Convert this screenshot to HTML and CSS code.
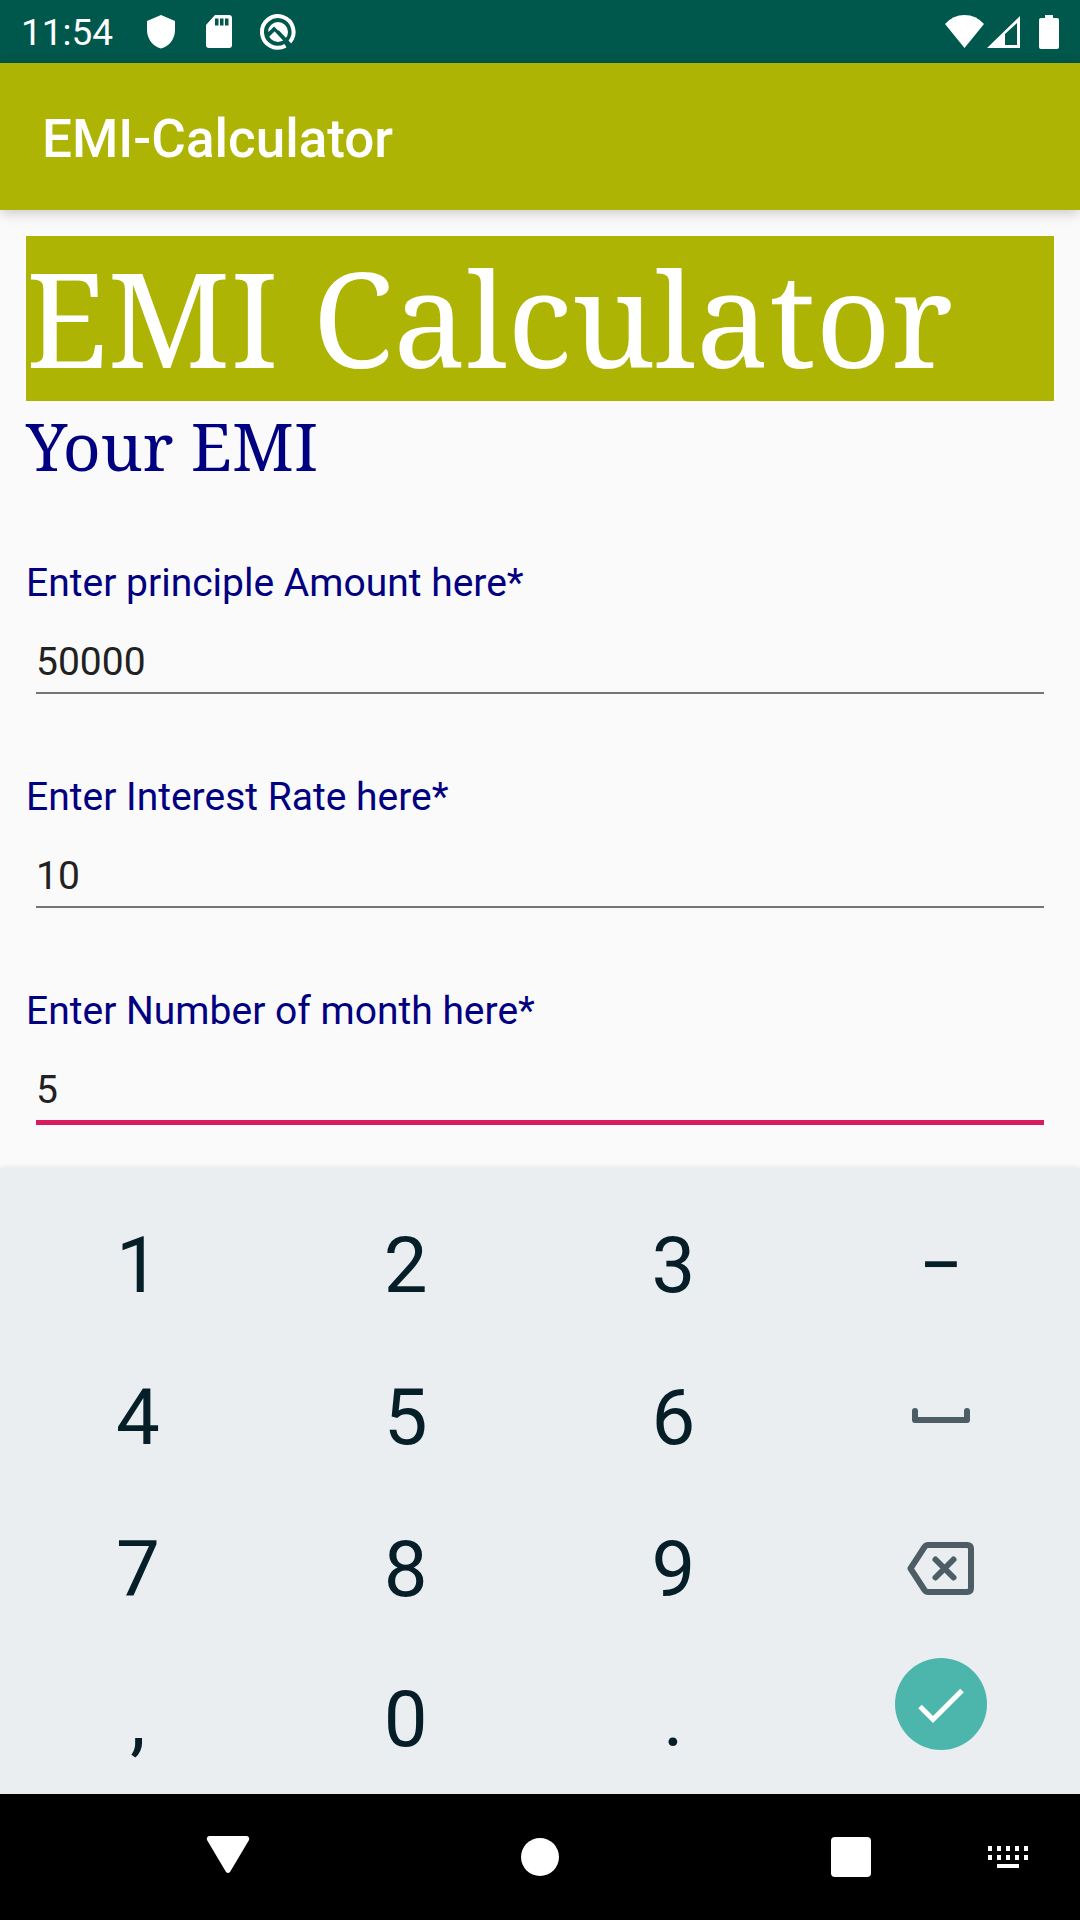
FILE: index.html
```html
<!DOCTYPE html>
<html lang="en">
<head>
<meta charset="utf-8">
<meta name="viewport" content="width=device-width, initial-scale=1">
<title>EMI-Calculator</title>
<link rel="stylesheet" href="styles.css">
</head>
<body>
<div class="status-bar">
  <time class="clock">11:54</time>
  <div class="notices">
    <svg width="28" height="34" viewBox="0 0 28 34" aria-hidden="true"><path d="M14 0L28 6V15C28 24 22 31.500 14 33.500C6 31.500 0 24 0 15V6Z"/></svg>
    <svg width="28" height="34" viewBox="-2 0 28 34" aria-hidden="true"><path fill-rule="evenodd" d="M10 0H24Q27 0 27 3V30Q27 33 24 33H4Q1 33 1 30V10ZM10 3.500V10.500H13.500V3.500ZM15 3.500V10.500H18.500V3.500ZM20 3.500V10.500H23.500V3.500Z"/></svg>
    <svg width="38" height="38" viewBox="0 0 38 38" aria-hidden="true"><path class="ring" d="M30.500 29.500A15.800 15.800 0 1 0 26.500 32.700"/><circle cx="19" cy="19" r="10"/><path class="cut" d="M8 23L15.500 15.500L31 32"/><path class="slash" d="M10 17L15 12L20 17"/></svg>
  </div>
  <div class="signals">
    <svg width="40" height="34" viewBox="0 0 40 34" aria-hidden="true"><path d="M0 9Q8 0 19.500 0Q31 0 39 9L19.500 33Z"/></svg>
    <svg width="34" height="34" viewBox="0 0 34 34" aria-hidden="true"><path fill-rule="evenodd" d="M0 33L33 1V33ZM18 19V30H30V8Z"/></svg>
    <svg class="battery" width="20" height="34" viewBox="0 0 20 34" aria-hidden="true"><path d="M6 0H14V3H18Q20 3 20 5V32Q20 34 18 34H2Q0 34 0 32V5Q0 3 2 3H6Z"/></svg>
  </div>
</div>
<header class="app-bar"><span class="app-name">EMI-Calculator</span></header>
<main class="content">
  <h1 class="banner">EMI Calculator</h1>
  <h2 class="result">Your EMI</h2>
  <form class="fields">
    <div class="field">
      <label for="principal">Enter principle Amount here*</label>
      <input id="principal" type="text" inputmode="decimal" value="50000">
    </div>
    <div class="field">
      <label for="rate">Enter Interest Rate here*</label>
      <input id="rate" type="text" inputmode="decimal" value="10">
    </div>
    <div class="field active">
      <label for="months">Enter Number of month here*</label>
      <input id="months" type="text" inputmode="decimal" value="5">
    </div>
  </form>
</main>
<section class="keypad" aria-label="Number keypad">
  <button type="button">1</button>
  <button type="button">2</button>
  <button type="button">3</button>
  <button type="button">−</button>
  <button type="button">4</button>
  <button type="button">5</button>
  <button type="button">6</button>
  <button type="button" aria-label="Space"><svg width="60" height="20" viewBox="0 0 60 20"><path class="key-line" d="M4 4V13H56V4"/></svg></button>
  <button type="button">7</button>
  <button type="button">8</button>
  <button type="button">9</button>
  <button type="button" aria-label="Delete"><svg width="68" height="54" viewBox="0 0 68 54"><path class="key-line" d="M21 3H60Q64 3 64 7V46Q64 50 60 50H21Q19 50 17.500 48L3.500 26.500L17.500 5Q19 3 21 3Z"/><path class="key-line" d="M28.500 17.500L46.500 35.500M46.500 17.500L28.500 35.500"/></svg></button>
  <button type="button">,</button>
  <button type="button">0</button>
  <button type="button">.</button>
  <button type="button" class="done" aria-label="Done"><svg width="92" height="92" viewBox="0 0 92 92"><circle cx="46" cy="46" r="46"/><path d="M25 48.500L38 61.500L67 32.500"/></svg></button>
</section>
<nav class="nav-bar" aria-label="System navigation">
  <div class="nav-main">
    <button type="button" aria-label="Back"><svg width="44" height="44" viewBox="0 0 44 44"><path d="M3 1H41Q44 2 43 5L24 37Q22 39 20 37L1 5Q0 2 3 1Z"/></svg></button>
    <button type="button" aria-label="Home"><svg width="44" height="44" viewBox="0 0 44 44"><circle cx="22" cy="22" r="19"/></svg></button>
    <button type="button" aria-label="Recent apps"><svg width="44" height="44" viewBox="0 0 44 44"><rect x="1" y="2" width="40" height="40" rx="4"/></svg></button>
  </div>
  <button type="button" aria-label="Switch keyboard"><svg width="42" height="24" viewBox="0 0 42 24"><path d="M1 1h4v5h-4zM10 1h4v5h-4zM19 1h4v5h-4zM28 1h4v5h-4zM37 1h4v5h-4zM1 10h4v5h-4zM10 10h4v5h-4zM19 10h4v5h-4zM28 10h4v5h-4zM37 10h4v5h-4zM10 19h22v4h-22z"/></svg></button>
</nav>
</body>
</html>
```
FILE: styles.css
```css
* {
  box-sizing: border-box;
}

body {
  display: flex;
  flex-direction: column;
  min-height: 100vh;
  margin: 0;
  background: #fafafa;
  font-family: Roboto, sans-serif;
}

svg {
  display: block;
}

button {
  display: flex;
  align-items: center;
  justify-content: center;
  padding: 0;
  border: 0;
  background: none;
  color: inherit;
  font: inherit;
}

.status-bar {
  display: flex;
  align-items: center;
  height: 63px;
  padding: 0 21px;
  background: #00574b;
  color: #fff;
  fill: #fff;
}

.clock {
  width: 126px;
  padding-top: 3px;
  font-size: 37px;
  line-height: 44px;
}

.notices {
  display: flex;
  align-items: center;
  gap: 28px;
}

.notices svg {
  overflow: visible;
}

.ring {
  fill: none;
  stroke: #fff;
  stroke-width: 4;
}

.cut {
  fill: none;
  stroke: #00574b;
  stroke-width: 4;
}

.slash {
  fill: none;
  stroke: #fff;
  stroke-width: 2;
}

.signals {
  display: flex;
  gap: 2px;
  margin-left: auto;
}

.battery {
  margin-left: 16px;
}

.app-bar {
  display: flex;
  align-items: center;
  height: 147px;
  padding: 4px 42px 0;
  background: #adb404;
  box-shadow: 0 3px 12px rgba(0, 0, 0, 0.2);
  color: #fff;
}

.app-name {
  font-size: 53px;
  font-weight: 500;
  line-height: 62px;
}

.content {
  flex: 1;
  padding: 26px 26px 43px;
  color: #000080;
}

.banner,
.result {
  margin: 0;
  font-family: "Noto Serif", "Liberation Serif", serif;
  font-weight: 400;
}

.banner {
  padding-bottom: 2px;
  background: #adb404;
  color: #fff;
  font-size: 131px;
  line-height: 163px;
}

.result {
  font-size: 66px;
  line-height: 89px;
}

.fields {
  display: grid;
  gap: 80px;
  padding-top: 70px;
}

.field {
  display: flex;
  flex-direction: column;
  font-size: 39px;
  line-height: 46px;
}

.field input {
  height: 88px;
  margin: 0 10px;
  padding: 33px 0 7px;
  border: 0;
  border-bottom: 2px solid #757575;
  border-radius: 0;
  outline: 0;
  background: none;
  color: #212121;
  font: inherit;
}

.field.active input {
  height: 91px;
  border-bottom: 5px solid #d81b60;
}

.keypad {
  display: grid;
  grid-template-columns: repeat(4, 1fr);
  grid-template-rows: repeat(3, 152px) 149px;
  padding: 21px 5px 0 4px;
  background: #ebeef1;
  box-shadow: 0 -1px 5px rgba(0, 0, 0, 0.08);
  color: #051e28;
  font-size: 78px;
}

.key-line {
  fill: none;
  stroke: #4c5d66;
  stroke-width: 6;
  stroke-linecap: round;
  stroke-linejoin: round;
}

.done {
  padding-bottom: 31px;
}

.done circle {
  fill: #4db6ac;
}

.done path {
  fill: none;
  stroke: #fff;
  stroke-width: 5;
}

.nav-bar {
  display: grid;
  grid-template-columns: 1fr 145px;
  height: 126px;
  padding-left: 145px;
  background: #000;
  fill: #fff;
}

.nav-main {
  display: flex;
  justify-content: space-between;
}

.nav-main button {
  width: 166px;
}
```
